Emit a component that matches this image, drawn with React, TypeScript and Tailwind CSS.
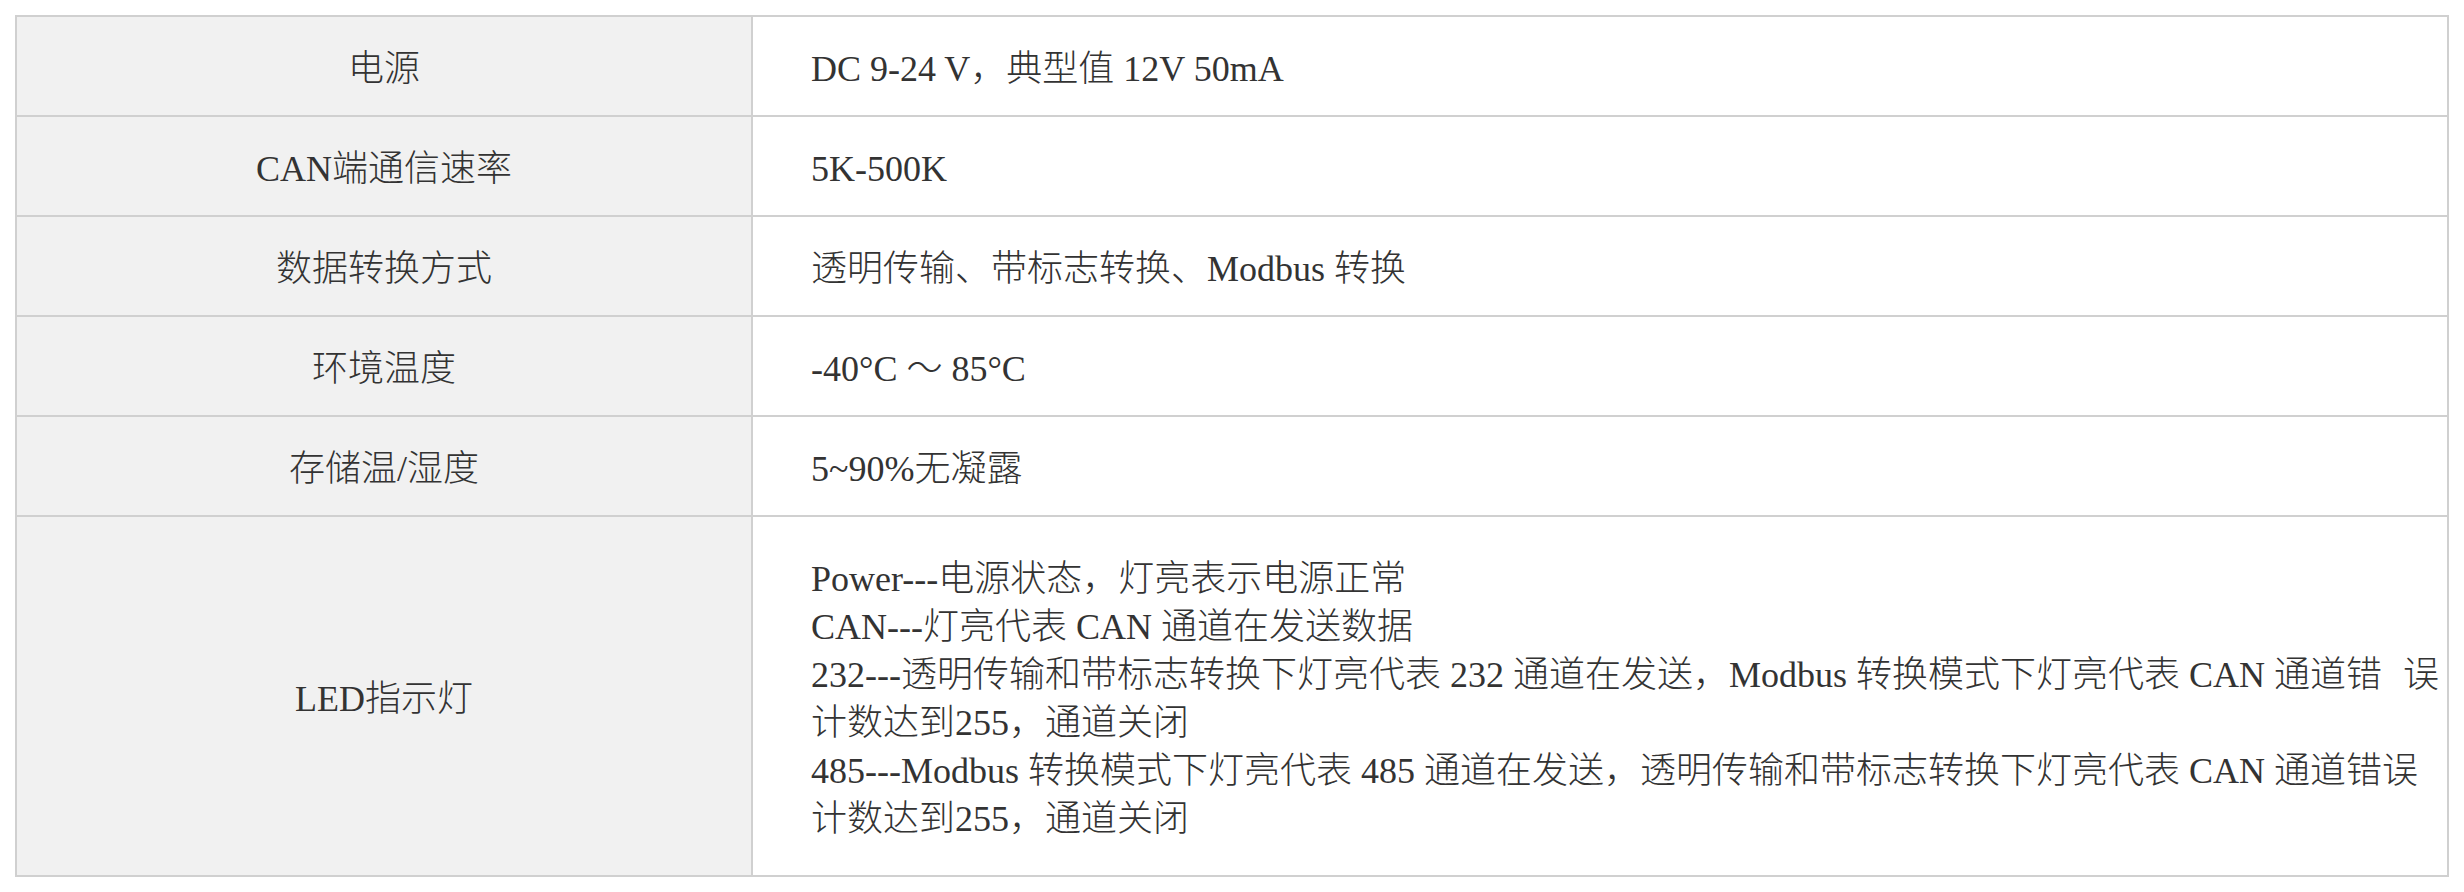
import React from 'react';

type Row = {
  label: string;
  value: React.ReactNode;
  tall?: boolean;
};

const ledLines: React.ReactNode[] = [
  'Power---电源状态，灯亮表示电源正常',
  'CAN---灯亮代表 CAN 通道在发送数据',
  <>
    232---透明传输和带标志转换下灯亮代表 232 通道在发送，Modbus 转换模式下灯亮代表 CAN 通道错
    <span className="inline-block w-[21px]" />误
  </>,
  '计数达到255，通道关闭',
  '485---Modbus 转换模式下灯亮代表 485 通道在发送，透明传输和带标志转换下灯亮代表 CAN 通道错误',
  '计数达到255，通道关闭',
];

const rows: Row[] = [
  { label: '电源', value: 'DC 9-24 V，典型值 12V 50mA' },
  { label: 'CAN端通信速率', value: '5K-500K' },
  { label: '数据转换方式', value: '透明传输、带标志转换、Modbus 转换' },
  { label: '环境温度', value: '-40°C ～ 85°C' },
  { label: '存储温/湿度', value: '5~90%无凝露' },
  {
    label: 'LED指示灯',
    tall: true,
    value: (
      <div className="flex flex-col">
        {ledLines.map((line, idx) => (
          <div key={idx} className="whitespace-nowrap">
            {line}
          </div>
        ))}
      </div>
    ),
  },
];

const App: React.FC = () => {
  return (
    <div className="min-h-[892px] bg-white pt-[15px] pl-[15px]">
      <div
        className="grid w-[2434px] grid-cols-[736px_1696px] border-t-2 border-l-2 border-[#d0d0d0] text-[36px] leading-[48px] font-light text-[#333]"
        style={{ fontFamily: '"Liberation Serif", "Noto Sans CJK SC", serif' }}
      >
        {rows.map((row) => (
          <React.Fragment key={row.label}>
            <div
              className={`flex items-center justify-center border-r-2 border-b-2 border-[#d0d0d0] bg-[#f1f1f1] pt-[6px] ${
                row.tall ? 'h-[360px]' : 'h-[100px]'
              }`}
            >
              {row.label}
            </div>
            <div
              className={`flex items-center border-r-2 border-b-2 border-[#d0d0d0] bg-white pt-[6px] pl-[58px] ${
                row.tall ? 'h-[360px]' : 'h-[100px]'
              }`}
            >
              {row.value}
            </div>
          </React.Fragment>
        ))}
      </div>
    </div>
  );
};

export default App;
